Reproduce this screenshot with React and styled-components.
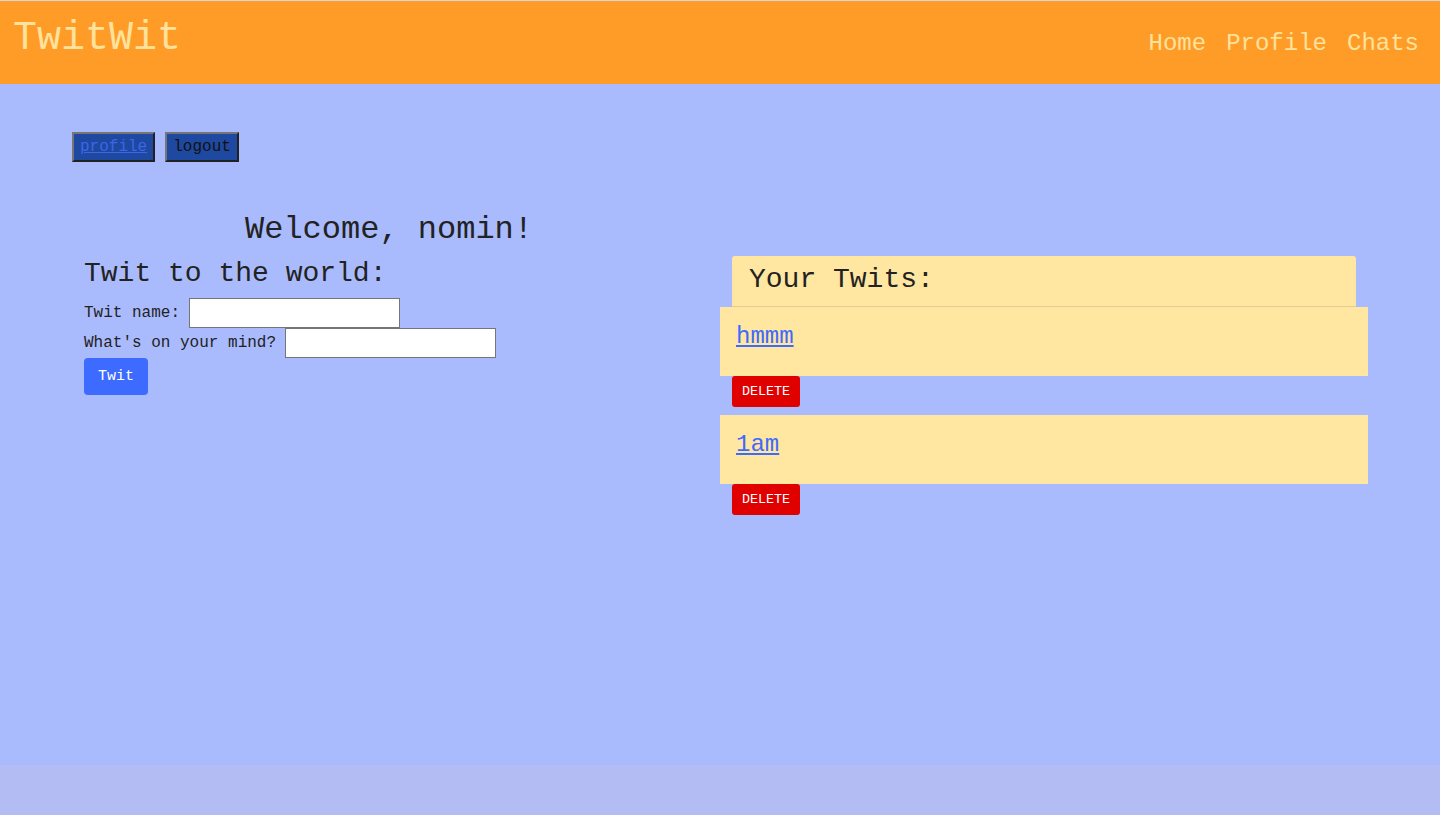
import React from 'react';
import styled, { createGlobalStyle } from 'styled-components';

const GlobalStyle = createGlobalStyle`
  html, body {
    margin: 0;
    padding: 0;
    background: #b3bdf3;
    font-family: "Liberation Mono", "Courier New", monospace;
  }
`;

const Header = styled.header`
  height: 83px;
  border-top: 1px solid #d6d6d6;
  background: #ff9c28;
  display: flex;
  justify-content: space-between;
  align-items: flex-start;
  padding: 0 21px 0 13px;
`;

const Logo = styled.div`
  color: #ffe29c;
  font-size: 40px;
  line-height: 46px;
  margin-top: 15px;
`;

const Nav = styled.nav`
  display: flex;
  gap: 20px;
  margin-top: 29px;
`;

const NavLink = styled.a`
  color: #ffe29c;
  font-size: 24px;
  line-height: 28px;
  text-decoration: none;
`;

const Main = styled.main`
  background: #aabbfd;
  height: 681px;
  padding: 48px 72px 0;
  box-sizing: border-box;
`;

const TopButtons = styled.div`
  display: flex;
  gap: 10px;
`;

const DarkButton = styled.button`
  height: 30px;
  padding: 0 6px;
  background: #1f48a0;
  border: 2px outset #767676;
  font-family: "Liberation Mono", "Courier New", monospace;
  font-size: 16px;
  color: #111;
  cursor: pointer;
`;

const ButtonLink = styled.a`
  color: #3b66e8;
  text-decoration: underline;
`;

const Columns = styled.div`
  display: grid;
  grid-template-columns: 634px 648px;
  gap: 14px;
  margin-top: 50px;
`;

const LeftCol = styled.section`
  display: flex;
  flex-direction: column;
`;

const Welcome = styled.h1`
  margin: 0;
  font-size: 32px;
  line-height: 36px;
  font-weight: normal;
  text-align: center;
  color: #222;
`;

const FormTitle = styled.h2`
  margin: 10px 0 8px 12px;
  font-size: 28px;
  line-height: 32px;
  font-weight: normal;
  color: #222;
`;

const Form = styled.form`
  display: flex;
  flex-direction: column;
  align-items: flex-start;
  padding-left: 12px;
`;

const Row = styled.label`
  display: flex;
  align-items: center;
  gap: 9px;
  height: 30px;
  font-size: 16px;
  color: #222;
`;

const Input = styled.input`
  width: 211px;
  height: 30px;
  box-sizing: border-box;
  border: 1px solid #767676;
  background: #fff;
`;

const TwitButton = styled.button`
  width: 64px;
  height: 37px;
  background: #3d6aff;
  color: #fff;
  border: none;
  border-radius: 4px;
  font-family: "Liberation Mono", "Courier New", monospace;
  font-size: 15px;
  cursor: pointer;
`;

const RightCol = styled.section`
  padding-top: 44px;
`;

const ListHeader = styled.div`
  margin: 0 12px;
  height: 51px;
  box-sizing: border-box;
  padding-left: 17px;
  background: #ffe6a1;
  border-radius: 3px 3px 0 0;
  border-bottom: 1px solid #e2cc90;
  font-size: 28px;
  line-height: 48px;
  color: #222;
`;

const Item = styled.div`
  height: 69px;
  box-sizing: border-box;
  padding: 16px 16px 0;
  background: #ffe6a1;
`;

const ItemLink = styled.a`
  font-size: 24px;
  line-height: 28px;
  color: #3d6aff;
  text-decoration: underline;
`;

const DeleteButton = styled.button`
  display: block;
  margin: 0 0 8px 12px;
  width: 68px;
  height: 31px;
  padding: 0;
  background: #e00000;
  color: #fff;
  border: none;
  border-radius: 3px;
  font-family: "Liberation Mono", "Courier New", monospace;
  font-size: 13.33px;
  cursor: pointer;
`;

const twits = ['hmmm', '1am'];

export default function App() {
  return (
    <>
      <GlobalStyle />
      <Header>
        <Logo>TwitWit</Logo>
        <Nav>
          <NavLink href="#">Home</NavLink>
          <NavLink href="#">Profile</NavLink>
          <NavLink href="#">Chats</NavLink>
        </Nav>
      </Header>
      <Main>
        <TopButtons>
          <DarkButton><ButtonLink href="#">profile</ButtonLink></DarkButton>
          <DarkButton>logout</DarkButton>
        </TopButtons>
        <Columns>
          <LeftCol>
            <Welcome>Welcome, nomin!</Welcome>
            <FormTitle>Twit to the world:</FormTitle>
            <Form onSubmit={(e) => e.preventDefault()}>
              <Row>Twit name: <Input type="text" /></Row>
              <Row>What's on your mind? <Input type="text" /></Row>
              <TwitButton type="submit">Twit</TwitButton>
            </Form>
          </LeftCol>
          <RightCol>
            <ListHeader>Your Twits:</ListHeader>
            {twits.map((t) => (
              <div key={t}>
                <Item><ItemLink href="#">{t}</ItemLink></Item>
                <DeleteButton>DELETE</DeleteButton>
              </div>
            ))}
          </RightCol>
        </Columns>
      </Main>
    </>
  );
}
